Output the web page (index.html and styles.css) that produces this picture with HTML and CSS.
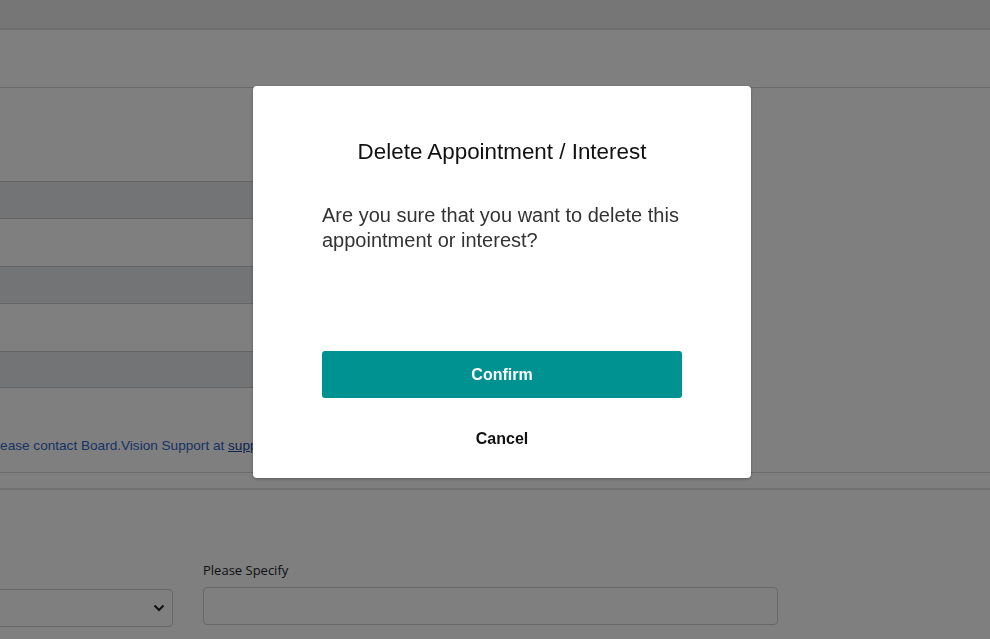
FILE: index.html
```html
<!DOCTYPE html>
<html lang="en">
<head>
<meta charset="utf-8">
<title>Delete Appointment / Interest</title>
<link rel="stylesheet" href="styles.css">
</head>
<body>
<div class="page">
  <div class="topbar"></div>
  <div class="subheader"></div>
  <section class="card card-top">
    <div class="table">
      <div class="row row-dark"></div>
      <div class="row row-light"></div>
      <div class="row row-dark"></div>
      <div class="row row-light"></div>
      <div class="row row-dark"></div>
    </div>
    <p class="help">Please contact Board.Vision Support at <a href="#" class="help-link">support@board.vision</a></p>
  </section>
  <section class="card card-form">
    <div class="form-row">
      <div class="field field-select">
        <div class="select">
          <svg class="chev" width="12" height="8" viewBox="0 0 12 8"><path d="M1.5 1.5 L6 6 L10.5 1.5" fill="none" stroke="#222" stroke-width="2"/></svg>
        </div>
      </div>
      <div class="field field-input">
        <label class="label">Please Specify</label>
        <div class="input"></div>
      </div>
    </div>
  </section>
</div>

<div class="overlay">
  <div class="modal" role="dialog">
    <h2 class="modal-title">Delete Appointment / Interest</h2>
    <p class="modal-text">Are you sure that you want to delete this appointment or interest?</p>
    <button class="btn-confirm">Confirm</button>
    <button class="btn-cancel">Cancel</button>
  </div>
</div>
</body>
</html>
```

FILE: styles.css
```css
* { box-sizing: border-box; }
html, body { margin: 0; padding: 0; }
body {
  font-family: "Liberation Sans", Arial, sans-serif;
  background: #ffffff;
  width: 990px;
  height: 639px;
  overflow: hidden;
}
.page { width: 990px; }
.topbar {
  height: 30px;
  background: #ececec;
  border-bottom: 2px solid #dcdcdc;
}
.subheader {
  height: 58px;
  background: #fefefe;
  border-bottom: 1px solid #d4d4d4;
}
.card-top {
  padding-top: 93px;
  border-bottom: 1px solid #d8d8d8;
  height: 385px;
}
.table { width: 600px; }
.row { border-top: 1px solid #c8c8c8; }
.row:last-child { border-bottom: 1px solid #c8c8c8; }
.row-dark { height: 37px; background: #e6e8ec; }
.row-light { height: 48px; background: #ffffff; }
.help {
  margin: 50px 0 0 -12px;
  font-size: 13.6px;
  line-height: 16px;
  color: #2f66c8;
  white-space: nowrap;
}
.help-link { color: #1a4aa0; text-decoration: underline; }
.card-form {
  margin-top: 15px;
  border-top: 2px solid #e4e4e4;
  background: #fff;
  height: 160px;
  padding-top: 71px;
}
.form-row {
  display: flex;
  align-items: flex-end;
  gap: 30px;
  margin-left: -30px;
}
.field { display: flex; flex-direction: column; }
.field-select { width: 203px; }
.field-input { width: 575px; }
.select {
  height: 38px;
  border: 1px solid #cfcfcf;
  border-radius: 4px;
  display: flex;
  align-items: center;
  justify-content: flex-end;
  padding-right: 7px;
  margin-bottom: -2px;
}
.label {
  font-family: "Open Sans", sans-serif;
  font-size: 13px;
  line-height: 18px;
  color: #212529;
  margin-bottom: 8px;
}
.input {
  height: 38px;
  border: 1px solid #cfcfcf;
  border-radius: 4px;
}
.overlay {
  position: fixed;
  inset: 0;
  background: rgba(0, 0, 0, 0.5);
}
.modal {
  position: absolute;
  left: 253px;
  top: 86px;
  width: 498px;
  height: 392px;
  background: #fff;
  border-radius: 4px;
  padding: 0 69px;
  display: flex;
  flex-direction: column;
  align-items: stretch;
  box-shadow: 0 1px 3px rgba(0,0,0,0.3);
}
.modal-title {
  margin: 54px -20px 0;
  font-size: 22.4px;
  font-weight: normal;
  line-height: 24px;
  text-align: center;
  color: #111;
}
.modal-text {
  margin: 39px 0 0;
  font-size: 20px;
  line-height: 25px;
  color: #333;
}
.btn-confirm {
  margin: 98px 0 0;
  height: 47px;
  width: 360px;
  border: none;
  border-radius: 3px;
  background: #009290;
  color: #fff;
  font-family: "Liberation Sans", Arial, sans-serif;
  font-weight: bold;
  font-size: 16px;
}
.btn-cancel {
  margin: 31px 0 0;
  height: 20px;
  border: none;
  background: none;
  font-family: "Liberation Sans", Arial, sans-serif;
  font-weight: bold;
  font-size: 16px;
  color: #111;
  padding: 0;
}
```
